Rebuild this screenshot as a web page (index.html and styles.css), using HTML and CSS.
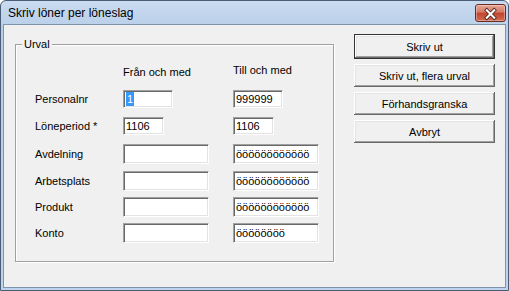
FILE: index.html
```html
<!DOCTYPE html>
<html lang="sv">
<head>
    <meta charset="UTF-8">
    <title>Skriv löner per löneslag</title>
    <link rel="stylesheet" href="styles.css">
</head>
<body>
    <div class="window">
        <div class="titlebar">
            <span class="title">Skriv löner per löneslag</span>
            <span class="close">
                <svg width="31" height="18" viewBox="0 0 31 18">
                    <path d="M11.5 5 L19.5 13 M19.5 5 L11.5 13" stroke="#4a2018" stroke-width="4" stroke-linecap="square"/>
                    <path d="M11.5 5 L19.5 13 M19.5 5 L11.5 13" stroke="#fff" stroke-width="2.2" stroke-linecap="square"/>
                </svg>
            </span>
        </div>
        <div class="client">
            <div class="group">
                <span class="group-label">Urval</span>
                <div class="grid">
                    <span></span>
                    <span class="col-head">Från och med</span>
                    <span class="col-head till">Till och med</span>

                    <span class="label">Personalnr</span>
                    <div class="field w50"><span class="sel">1</span></div>
                    <div class="field w50">999999</div>

                    <span class="label">Löneperiod *</span>
                    <div class="field w41">1106</div>
                    <div class="field w41">1106</div>

                    <span class="label tall">Avdelning</span>
                    <div class="field wide tall"></div>
                    <div class="field wide tall">öööööööööööö</div>

                    <span class="label tall">Arbetsplats</span>
                    <div class="field wide tall"></div>
                    <div class="field wide tall">öööööööööööö</div>

                    <span class="label tall">Produkt</span>
                    <div class="field wide tall"></div>
                    <div class="field wide tall">öööööööööööö</div>

                    <span class="label tall">Konto</span>
                    <div class="field wide tall"></div>
                    <div class="field wide tall">öööööööö</div>
                </div>
            </div>

            <div class="buttons">
                <button class="btn default">Skriv ut</button>
                <button class="btn">Skriv ut, flera urval</button>
                <button class="btn">Förhandsgranska</button>
                <button class="btn">Avbryt</button>
            </div>
        </div>
    </div>
</body>
</html>
```

FILE: styles.css
```css
* {
    margin: 0;
    padding: 0;
    box-sizing: border-box;
}
body {
    font-family: "Liberation Sans", Arial, sans-serif;
    font-size: 11px;
    color: #000;
    background: #fff;
}
.window {
    width: 509px;
    height: 291px;
    display: flex;
    flex-direction: column;
    border: 1px solid #4a5d75;
    border-radius: 6px 6px 0 0;
    padding: 0 2px 2px 2px;
    background: linear-gradient(#c9dbf0, #b7cde8 30px, #bed3ec);
}
.titlebar {
    height: 23px;
    display: flex;
    align-items: center;
    justify-content: space-between;
    padding-left: 5px;
}
.title {
    font-size: 12px;
    color: #000;
}
.close {
    width: 31px;
    height: 18px;
    margin-right: 0;
    margin-top: 1px;
    border: 1px solid #6b2a1e;
    border-radius: 3px;
    background: linear-gradient(#e8a597, #d47a66 45%, #c1432c 50%, #d36a53);
    display: flex;
    box-shadow: inset 0 0 0 1px rgba(255, 255, 255, 0.35);
}
.client {
    flex: 1;
    display: flex;
    align-items: flex-start;
    background: #f0f0f0;
    border: 1px solid #7f93ad;
    padding: 9px 0 0 11px;
}
/* Urval */
.group {
    position: relative;
    width: 319px;
    height: 218px;
    margin-top: 10px;
    border: 1px solid #a0a0a0;
    box-shadow: inset 1px 1px 0 #fff, 1px 1px 0 #fff;
}
.group-label {
    position: absolute;
    top: -7px;
    left: 6px;
    padding: 0 2px;
    background: #f0f0f0;
    line-height: 13px;
}
.grid {
    display: grid;
    grid-template-columns: 88px 110px 85px;
    grid-template-rows: 25px 27px 27px 27px 26px 26px;
    align-items: start;
    padding: 20px 0 0 19px;
}
.col-head {
    line-height: 13px;
    margin-top: 1px;
}
.col-head.till {
    margin-top: -1px;
}
.label {
    line-height: 18px;
}
.label.tall {
    line-height: 20px;
}
.field {
    height: 18px;
    background: #fff;
    border-top: 1px solid #a0a0a0;
    border-left: 1px solid #a0a0a0;
    border-right: 1px solid #fff;
    border-bottom: 1px solid #fff;
    box-shadow: inset 1px 1px 0 #696969, inset -1px -1px 0 #e3e3e3;
    padding: 1px 0 0 2px;
    line-height: 14px;
    white-space: nowrap;
    overflow: hidden;
}
.field.tall {
    height: 20px;
    padding-top: 2px;
}
.w50 { width: 50px; }
.w41 { width: 41px; }
.wide { width: 86px; }
.sel {
    display: inline-block;
    background: #3399ff;
    color: #fff;
    padding: 0 1px;
}
/* Knappar */
.buttons {
    display: flex;
    flex-direction: column;
    gap: 5px;
    margin-left: 20px;
}
.btn {
    width: 141px;
    height: 23px;
    font-family: inherit;
    font-size: 11px;
    color: #000;
    background: #f0f0f0;
    border: none;
    box-shadow: inset -1px -1px 0 #696969, inset 1px 1px 0 #fff, inset -2px -2px 0 #a0a0a0, inset 2px 2px 0 #e3e3e3;
}
.btn.default {
    height: 25px;
    border: 1px solid #333;
}
```
